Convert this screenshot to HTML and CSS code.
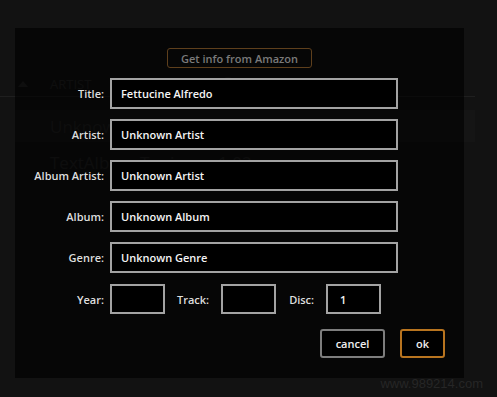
FILE: index.html
```html
<!DOCTYPE html>
<html>
<head>
<meta charset="utf-8">
<link rel="stylesheet" href="styles.css">
</head>
<body>
<div class="page">
  <div class="ghost">
    <div class="ghost-head">
      <span class="ghost-tri"></span>
      <span class="ghost-col">ARTIST</span>
      <span class="ghost-ring"></span>
      <span class="ghost-plus">+</span>
    </div>
    <div class="ghost-row">
      <span class="ghost-name">Unknown Artist</span>
      <span class="ghost-time">0:54</span>
    </div>
    <div class="ghost-row2">
      <span class="ghost-name">TextAlbum Tuning</span>
      <span class="ghost-time">1:02</span>
    </div>
  </div>

  <div class="dialog">
    <div class="amazon-row">
      <button class="amazon">Get info from Amazon</button>
    </div>
    <div class="form">
      <label class="label">Title:</label>
      <div class="field">Fettucine Alfredo</div>
      <label class="label">Artist:</label>
      <div class="field">Unknown Artist</div>
      <label class="label">Album Artist:</label>
      <div class="field">Unknown Artist</div>
      <label class="label">Album:</label>
      <div class="field">Unknown Album</div>
      <label class="label">Genre:</label>
      <div class="field">Unknown Genre</div>
      <label class="label year-label">Year:</label>
      <div class="small-row">
        <div class="field small"></div>
        <label class="label track-label">Track:</label>
        <div class="field small"></div>
        <label class="label disc-label">Disc:</label>
        <div class="field small">1</div>
      </div>
    </div>
    <div class="buttons">
      <button class="btn cancel">cancel</button>
      <button class="btn ok">ok</button>
    </div>
  </div>

  <div class="watermark">www.989214.com</div>
</div>
</body>
</html>
```
FILE: styles.css
```css
html, body {
  margin: 0;
  padding: 0;
}
body {
  background: #121212;
  font-family: "Open Sans", "DejaVu Sans", sans-serif;
}
.page {
  position: relative;
  width: 497px;
  height: 397px;
  overflow: hidden;
  background: #121212;
}
.ghost {
  padding-top: 72px;
  width: 475px;
}
.ghost-head {
  height: 24px;
  display: flex;
  align-items: center;
  border-bottom: 1px solid #1f1f1f;
  color: #262626;
  font: 13px "Open Sans", sans-serif;
}
.ghost-tri {
  width: 0;
  height: 0;
  margin-left: 18px;
  border-left: 5px solid transparent;
  border-right: 5px solid transparent;
  border-bottom: 6px solid #262626;
}
.ghost-col {
  margin-left: 22px;
}
.ghost-ring {
  width: 10px;
  height: 10px;
  border: 2px solid #232323;
  border-radius: 50%;
  margin-left: 130px;
}
.ghost-plus {
  margin-left: 50px;
}
.ghost-row {
  margin-top: 13px;
  margin-left: 15px;
  height: 32px;
  background: #151515;
  display: flex;
  align-items: center;
  color: #262626;
  font: 17px "Open Sans", sans-serif;
}
.ghost-row2 {
  margin-left: 15px;
  height: 40px;
  display: flex;
  align-items: center;
  color: #242424;
  font: 17px "Open Sans", sans-serif;
}
.ghost-name {
  margin-left: 35px;
  width: 168px;
}
.dialog {
  position: absolute;
  left: 15px;
  top: 28px;
  width: 449px;
  height: 350px;
  box-sizing: border-box;
  padding-top: 20px;
  background: rgba(0, 0, 0, 0.62);
}
.amazon-row {
  display: flex;
  justify-content: center;
}
.amazon {
  width: 145px;
  height: 20px;
  box-sizing: border-box;
  border: 1px solid #5e3f1c;
  border-radius: 3px;
  background: transparent;
  color: #7a7a7a;
  font: 600 11px "Open Sans", sans-serif;
  padding: 0;
}
.form {
  margin-top: 10px;
  display: grid;
  grid-template-columns: 89px 288px;
  column-gap: 6px;
  row-gap: 10px;
  align-items: center;
}
.label {
  text-align: right;
  color: #dedede;
  font: 600 11px "Open Sans", sans-serif;
  white-space: nowrap;
}
.field {
  height: 31px;
  box-sizing: border-box;
  border: 2px solid #a3a3a3;
  background: #000;
  color: #f4f4f4;
  font: 600 11px "Open Sans", sans-serif;
  padding-left: 9px;
  display: flex;
  align-items: center;
}
.year-label {
  margin-top: 1px;
}
.small-row {
  display: flex;
  align-items: center;
  margin-top: 1px;
}
.field.small {
  width: 55px;
  height: 30px;
  padding-left: 12px;
}
.track-label {
  margin: 0 12px 0 12px;
}
.disc-label {
  margin: 0 12px 0 13px;
}
.buttons {
  margin-top: 15px;
  display: flex;
  justify-content: flex-end;
  gap: 15px;
  padding-right: 19px;
}
.btn {
  height: 29px;
  box-sizing: border-box;
  border-radius: 3px;
  background: #000;
  color: #efefef;
  font: 600 11px "Open Sans", sans-serif;
  padding: 0;
}
.cancel {
  width: 65px;
  border: 2px solid #7d7d7d;
}
.ok {
  width: 45px;
  border: 2px solid #b8741f;
}
.watermark {
  position: absolute;
  right: 14px;
  bottom: 6px;
  color: #262626;
  font: 13px "Liberation Sans", Arial, sans-serif;
}
```
